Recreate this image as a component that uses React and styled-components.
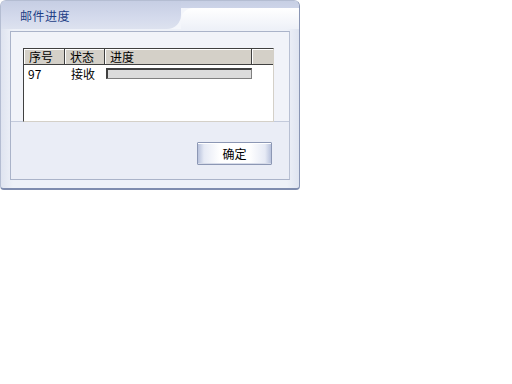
import React from "react";
import styled, { createGlobalStyle } from "styled-components";

const GlobalStyle = createGlobalStyle`
  html, body {
    margin: 0;
    padding: 0;
    background: #ffffff;
  }
  body {
    font-family: "Noto Sans CJK SC", "Liberation Sans", sans-serif;
    font-size: 12px;
  }
`;

const Window = styled.div`
  width: 300px;
  height: 190px;
  box-sizing: border-box;
  display: flex;
  flex-direction: column;
  background: linear-gradient(to right, #dfe4f0, #eef1f8 12px, #eef1f8 calc(100% - 12px), #dfe4f0);
  border: 1px solid #b4bdd2;
  border-right-color: #8a96b4;
  border-bottom: 2px solid #7f8cae;
  border-radius: 6px 6px 4px 4px;
  overflow: hidden;
`;

const TitleBar = styled.div`
  height: 28px;
  flex-shrink: 0;
  display: flex;
  background: linear-gradient(to bottom, #c7cfe4 0, #cdd4e8 7px, #f4f6fb 7px);
`;

const Tab = styled.div`
  width: 180px;
  display: flex;
  align-items: center;
  padding-left: 19px;
  box-sizing: border-box;
  background: linear-gradient(to bottom, #c6cee4, #d4daec 60%, #dde2ef);
  border-bottom-right-radius: 14px;
  color: #1e3f86;
  font-size: 12px;
  letter-spacing: 0.5px;
`;

const TabRest = styled.div`
  flex: 1;
  margin-top: 7px;
  border-top-left-radius: 12px;
  background: linear-gradient(to bottom, #ffffff, #eef1f8);
`;

const Body = styled.div`
  flex: 1;
  padding: 2px 9px 8px 9px;
  display: flex;
  flex-direction: column;
`;

const Panel = styled.div`
  flex: 1;
  display: flex;
  flex-direction: column;
  border: 1px solid #aab3c9;
  border-right-color: #b8c0d3;
  box-shadow: inset 1px 1px 0 #ffffff;
`;

const ListArea = styled.div`
  height: 90px;
  padding: 16px 15px 0 12px;
  box-sizing: border-box;
  background: #f1f3f9;
  border-bottom: 1px solid #c3cadb;
`;

const ListBox = styled.div`
  height: 74px;
  box-sizing: border-box;
  background: #ffffff;
  border-top: 1px solid #404040;
  border-left: 1px solid #404040;
  border-right: 1px solid #d4d0c8;
  border-bottom: 1px solid #d4d0c8;
`;

const HeaderRow = styled.div`
  display: flex;
  height: 16px;
`;

const HeaderCell = styled.div`
  width: ${({ $w }) => $w}px;
  flex: ${({ $grow }) => ($grow ? 1 : "none")};
  box-sizing: border-box;
  background: #d4d0c8;
  border-right: 1px solid #404040;
  border-bottom: 1px solid #404040;
  box-shadow: inset 1px 1px 0 #ffffff;
  padding-left: 5px;
  line-height: 15px;
  color: #000;
  &:last-child {
    border-right: none;
  }
`;

const Row = styled.div`
  display: flex;
  height: 14px;
  align-items: center;
  margin-top: 1px;
`;

const Cell = styled.div`
  width: ${({ $w }) => $w}px;
  box-sizing: border-box;
  padding-left: ${({ $pad }) => $pad}px;
  line-height: 13px;
  color: #000;
`;

const Progress = styled.div`
  width: 146px;
  height: 11px;
  margin-left: 1px;
  box-sizing: border-box;
  background: #dcdcdc;
  border-top: 2px solid #404040;
  border-left: 2px solid #404040;
  border-right: 1px solid #808080;
  border-bottom: 1px solid #808080;
`;

const Footer = styled.div`
  flex: 1;
  display: flex;
  justify-content: flex-end;
  align-items: flex-start;
  padding: 20px 17px 0 0;
  background: #eaedf6;
`;

const Button = styled.button`
  width: 75px;
  height: 23px;
  padding: 0;
  border: 1px solid #8c97b4;
  border-radius: 1px;
  font-family: "Noto Sans CJK SC", sans-serif;
  font-size: 12px;
  color: #000;
  background: linear-gradient(
    to right,
    #b8c2dc 0,
    #e6eaf5 6px,
    #ffffff 30%,
    #ffffff 70%,
    #e6eaf5 calc(100% - 6px),
    #b8c2dc 100%
  );
  box-shadow: inset 0 1px 0 #ffffff, inset 0 -1px 0 #d6dbe9;
`;

export default function App() {
  return (
    <>
      <GlobalStyle />
      <Window>
        <TitleBar>
          <Tab>邮件进度</Tab>
          <TabRest />
        </TitleBar>
        <Body>
          <Panel>
            <ListArea>
              <ListBox>
                <HeaderRow>
                  <HeaderCell $w={41}>序号</HeaderCell>
                  <HeaderCell $w={40}>状态</HeaderCell>
                  <HeaderCell $w={147}>进度</HeaderCell>
                  <HeaderCell $grow>&nbsp;</HeaderCell>
                </HeaderRow>
                <Row>
                  <Cell $w={41} $pad={4}>97</Cell>
                  <Cell $w={40} $pad={6}>接收</Cell>
                  <Progress />
                </Row>
              </ListBox>
            </ListArea>
            <Footer>
              <Button>确定</Button>
            </Footer>
          </Panel>
        </Body>
      </Window>
    </>
  );
}
